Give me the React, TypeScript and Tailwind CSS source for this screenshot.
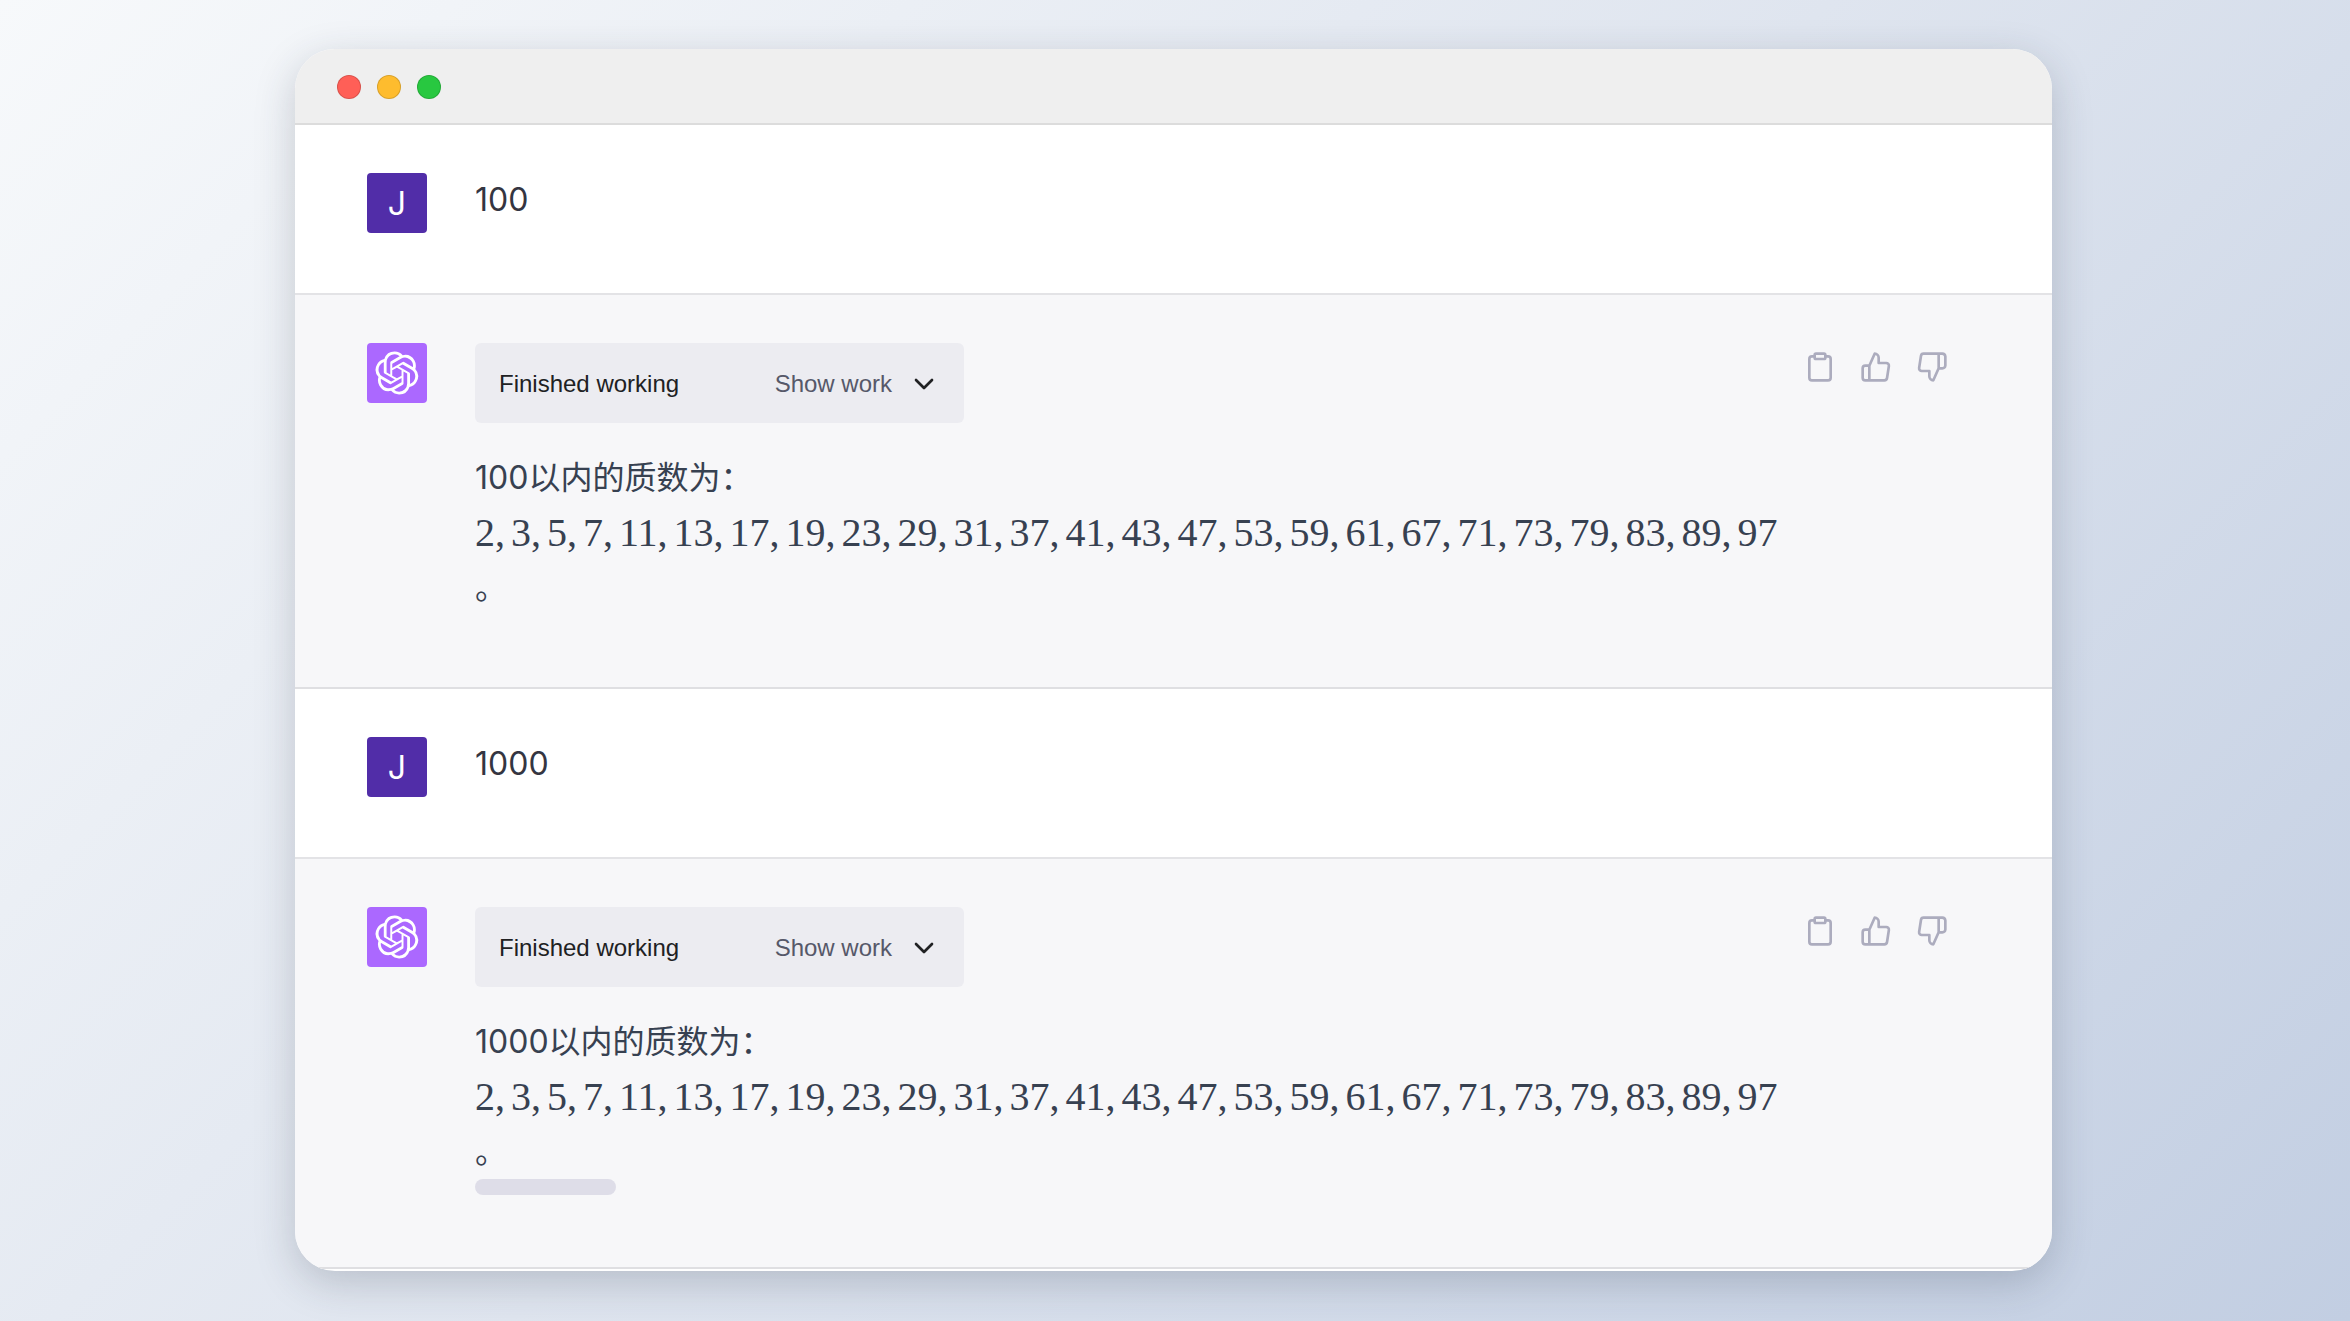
import { FiChevronDown, FiClipboard, FiThumbsDown, FiThumbsUp } from "react-icons/fi";

const primes = [
  2, 3, 5, 7, 11, 13, 17, 19, 23, 29, 31, 37, 41, 43, 47, 53, 59, 61, 67, 71, 73,
  79, 83, 89, 97,
];

function OpenAILogo() {
  return (
    <svg viewBox="0 0 41 41" fill="currentColor" className="size-11" aria-hidden="true">
      <path d="M37.532 16.87a9.963 9.963 0 0 0-.856-8.184 10.078 10.078 0 0 0-10.855-4.835A9.964 9.964 0 0 0 18.306.5a10.079 10.079 0 0 0-9.614 6.977 9.967 9.967 0 0 0-6.664 4.834 10.08 10.08 0 0 0 1.24 11.817 9.965 9.965 0 0 0 .856 8.185 10.079 10.079 0 0 0 10.855 4.835 9.965 9.965 0 0 0 7.516 3.35 10.078 10.078 0 0 0 9.617-6.981 9.967 9.967 0 0 0 6.663-4.834 10.079 10.079 0 0 0-1.243-11.813ZM22.498 37.886a7.474 7.474 0 0 1-4.799-1.735c.061-.033.168-.091.237-.134l7.964-4.6a1.294 1.294 0 0 0 .655-1.134V19.054l3.366 1.944a.12.12 0 0 1 .066.092v9.299a7.505 7.505 0 0 1-7.49 7.496ZM6.392 31.006a7.471 7.471 0 0 1-.894-5.023c.06.036.162.099.237.141l7.964 4.6a1.297 1.297 0 0 0 1.308 0l9.724-5.614v3.888a.12.12 0 0 1-.048.103l-8.051 4.649a7.504 7.504 0 0 1-10.24-2.744ZM4.297 13.62A7.469 7.469 0 0 1 8.2 10.333c0 .068-.004.19-.004.274v9.201a1.294 1.294 0 0 0 .654 1.132l9.723 5.614-3.366 1.944a.12.12 0 0 1-.114.01L7.04 23.856a7.504 7.504 0 0 1-2.743-10.237Zm27.658 6.437-9.724-5.615 3.367-1.943a.121.121 0 0 1 .113-.01l8.052 4.648a7.498 7.498 0 0 1-1.158 13.528v-9.476a1.293 1.293 0 0 0-.65-1.132Zm3.35-5.043c-.059-.037-.162-.099-.236-.141l-7.965-4.6a1.298 1.298 0 0 0-1.308 0l-9.723 5.614v-3.888a.12.12 0 0 1 .048-.103l8.05-4.645a7.497 7.497 0 0 1 11.135 7.763Zm-21.063 6.929-3.367-1.944a.12.12 0 0 1-.065-.092v-9.299a7.497 7.497 0 0 1 12.293-5.756 6.94 6.94 0 0 0-.236.134l-7.965 4.6a1.294 1.294 0 0 0-.654 1.132l-.006 11.225Zm1.829-3.943 4.33-2.501 4.332 2.5v5l-4.331 2.5-4.331-2.5V18Z" />
    </svg>
  );
}

function UserMessage({ text }: { text: string }) {
  return (
    <article className="flex gap-12 border-b-2 border-[#e3e3e6] bg-white pt-12 pr-24 pb-15 pl-18">
      <div className="flex size-15 shrink-0 items-center justify-center rounded-sm bg-[#512da8] pt-0.5 text-[32px] text-white">
        J
      </div>
      <p className="text-[32px] leading-[54px] text-[#343541]">{text}</p>
    </article>
  );
}

function AssistantMessage({ limit, streaming }: { limit: string; streaming?: boolean }) {
  return (
    <article className="flex gap-12 border-b-2 border-[#dfdfe2] bg-[#f7f7f9] pt-12 pr-24 pb-18 pl-18">
      <div className="flex size-15 shrink-0 items-center justify-center rounded-sm bg-[#ab68ff] text-white">
        <OpenAILogo />
      </div>

      <div className="min-w-0 flex-1 text-[#374151]">
        <div className="flex items-start justify-between">
          <div className="flex h-20 w-[489px] items-center justify-between rounded-md bg-[#ececf1] px-6 pt-0.5 font-['Liberation_Sans',sans-serif] text-2xl">
            <span className="text-[#202123]">Finished working</span>
            <button type="button" className="flex items-center gap-4 text-[#565869]">
              Show work
              <FiChevronDown className="size-8 text-[#202123]" />
            </button>
          </div>

          <div className="flex gap-2 text-[#acacbe]">
            <button type="button" aria-label="Copy" className="p-2">
              <FiClipboard className="size-8" />
            </button>
            <button type="button" aria-label="Good response" className="p-2">
              <FiThumbsUp className="size-8" />
            </button>
            <button type="button" aria-label="Bad response" className="p-2">
              <FiThumbsDown className="size-8" />
            </button>
          </div>
        </div>

        <div className="mt-[27px] text-[32px] leading-[55px]">
          <p>{limit}以内的质数为：</p>
          <p className="flex gap-1.5 font-['Liberation_Serif',serif] text-[40px] leading-[55px]">
            {primes.map((n, i) => (
              <span key={n}>
                {n}
                {i < primes.length - 1 && ","}
              </span>
            ))}
          </p>
          <p>。</p>
        </div>

        {streaming && <div className="h-4 w-[141px] rounded-full bg-[#dedde8]" />}
      </div>
    </article>
  );
}

export default function App() {
  return (
    <div className="min-h-screen bg-linear-135 from-[#f7f9fb] via-[#dfe5ef] to-[#c2cee2] pt-[49px] pr-[298px] pb-[50px] pl-[295px] font-[Inter,'Noto_Sans_CJK_SC',sans-serif]">
      <main className="overflow-hidden rounded-[40px] bg-white pb-[2px] shadow-[0_12px_40px_rgba(40,50,70,0.22)]">
        {/* Title bar */}
        <header className="flex h-[76px] items-center gap-4 border-b-2 border-[#dcdcdc] bg-[#efefef] px-[42px] pt-0.5">
          <span className="size-6 rounded-full border border-black/15 bg-[#ff5f57]" />
          <span className="size-6 rounded-full border border-black/15 bg-[#febc2e]" />
          <span className="size-6 rounded-full border border-black/15 bg-[#28c840]" />
        </header>

        <UserMessage text="100" />
        <AssistantMessage limit="100" />
        <UserMessage text="1000" />
        <AssistantMessage limit="1000" streaming />
      </main>
    </div>
  );
}
